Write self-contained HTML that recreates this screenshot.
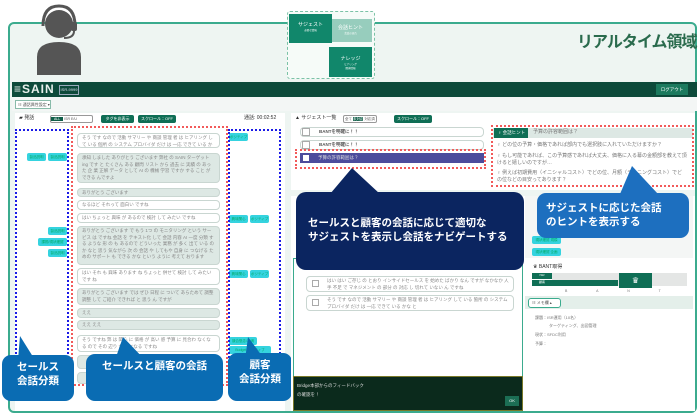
<!DOCTYPE html>
<html><head><meta charset="utf-8"><style>
*{box-sizing:border-box;margin:0;padding:0}
body{width:700px;height:416px;background:#fff;position:relative;overflow:hidden;font-family:"Liberation Sans","Noto Sans CJK JP",sans-serif;color:#555}
.a{position:absolute}
.t{font-size:5px;line-height:7px;color:#777}
.b{position:absolute;border:1px solid #c9d6d1;border-radius:4px;font-size:4.5px;line-height:6.5px;color:#888;padding:1px 4px;overflow:hidden}
.g{background:#dde8e4}
.w{background:#fff}
.tag{position:absolute;background:#35d3df;border-radius:2px;height:8px;width:19px;font-size:3.5px;color:#0a6;line-height:8px;text-align:center;white-space:nowrap;overflow:hidden}
.call{position:absolute;background:#0a6cb3;color:#fff;border-radius:9px;font-weight:bold;text-align:center}
.bd{position:absolute;border:2.5px dotted #1a1ae6}
.rd{position:absolute;border:2px dotted #f25a5a}
.gb{position:absolute;background:#0f6e55;color:#fff;font-size:4px;border-radius:2px;text-align:center;white-space:nowrap}
</style></head><body>
<div class="a" style="left:8px;top:22px;width:689px;height:391px;border:2px solid #3bab8e;border-radius:6px;background:#eef5f2"></div>
<svg class="a" style="left:34px;top:2px" width="50" height="74" viewBox="0 0 50 74">
<circle cx="25" cy="22" r="14" fill="#555"/>
<path d="M9 24 Q9 4 25 4 Q41 4 41 24" fill="none" stroke="#555" stroke-width="3"/>
<rect x="37" y="20" width="6" height="9" rx="2" fill="#555"/>
<path d="M40 29 Q40 36 30 36" fill="none" stroke="#555" stroke-width="2"/>
<path d="M3 73 L3 55 Q3 40 25 40 Q47 40 47 55 L47 73 Z" fill="#555"/>
</svg>
<div class="a" style="left:287px;top:11px;width:88px;height:68px;border:1px dashed #7bc2a6;border-radius:3px;background:#f6fbf8"></div>
<div class="a" style="left:329px;top:19px;width:43px;height:23px;background:#97cdbd;color:#fff;font-size:5px;text-align:center;padding-top:5px">会話ヒント<div style="font-size:2.5px">会話の流れ</div></div>
<div class="a" style="left:289px;top:14px;width:43px;height:29px;background:#11876b;color:#fff;font-size:5px;text-align:center;padding-top:7px">サジェスト<div style="font-size:2.5px">必要な情報</div></div>
<div class="a" style="left:329px;top:47px;width:43px;height:30px;background:#11876b;color:#fff;font-size:5px;text-align:center;padding-top:8px">ナレッジ<div style="font-size:2.5px">ヒアリング<br>関連情報</div></div>
<div class="a" style="left:577px;top:28px;font-size:16px;font-weight:bold;color:#2a6b4d;letter-spacing:-1px;white-space:nowrap">リアルタイム領域</div>
<div class="a" style="left:12px;top:82px;width:685px;height:15px;background:#0d4a3a"></div>
<div class="a" style="left:14px;top:82px;font-size:12px;color:#e8f0ec;letter-spacing:1px;font-weight:bold;line-height:15px">≡SAIN</div>
<div class="a" style="left:59px;top:85px;width:20px;height:10px;border:1px solid #9ab;color:#dde;font-size:4px;line-height:8px;text-align:center">ISR-9999</div>
<div class="a" style="left:656px;top:84px;width:32px;height:11px;background:#1c7a5e;color:#fff;font-size:4.5px;line-height:11px;text-align:center">ログアウト</div>
<div class="a" style="left:12px;top:97px;width:685px;height:14px;background:#f3f6f5"></div>
<div class="a" style="left:15px;top:100px;width:36px;height:9px;border:1px solid #8ba;background:#fff;font-size:4px;line-height:7px;padding-left:2px;white-space:nowrap">☷ 通話属性設定 ▾</div>
<div class="a" style="left:15px;top:113px;width:270px;height:298px;background:#fff"></div>
<div class="a t" style="left:19px;top:115px;color:#333">▰ 発話</div>
<div class="a" style="left:50px;top:115px;width:43px;height:8px;border:1px solid #999;border-radius:2px;font-size:3.5px;line-height:6px;white-space:nowrap"><span style="background:#0f5e48;color:#fff;padding:0 3px">ALL</span> ISR E/U</div>
<div class="gb" style="left:101px;top:115px;width:33px;height:8px;line-height:8px">タグを非表示</div>
<div class="gb" style="left:138px;top:115px;width:38px;height:8px;line-height:8px">スクロール：OFF</div>
<div class="a t" style="left:244px;top:115px;color:#333;white-space:nowrap">通話: 00:02:52</div>
<div class="b w" style="left:77px;top:133px;width:143px;height:15px">そう です なので 活動 サマリー や 商談 管理 者 は ヒアリング して いる 個所 の システム プロバイダ だけ は 一応 できて いる かな と</div>
<div class="b g" style="left:77px;top:153px;width:143px;height:30px">承知 しました ありがとう ございます 弊社 の SAIN ターゲット ing です と たくさん ある 顧問 リスト から 過去 に 実績 の あった 企 業 正解 データ として AI の 機械 学習 ですか する こと が できる んですよ</div>
<div class="b g" style="left:77px;top:188px;width:143px;height:9px">ありがとう ございます</div>
<div class="b w" style="left:77px;top:200px;width:143px;height:10px">なるほど それって 面白い ですね</div>
<div class="b w" style="left:77px;top:213px;width:143px;height:10px">はい ちょっと 興味 が あるので 検討 して みたい ですね</div>
<div class="b g" style="left:77px;top:226px;width:143px;height:39px">ありがとう ございます で もう 1つ の モニタリング という サービス は ですね 会話 を テキスト化 して 会話 内容 AI 一度 分類 する ような 形 の も あるので どういった 業務 が 多く 出て いる のか なと 思う 気ながら 次 の 会話 や してもや 自身 に つなげる ための サポート も できる かな という ように 考えて おります</div>
<div class="b w" style="left:77px;top:268px;width:143px;height:17px">はい それ も 興味 あります ね ちょっと 併せて 検討 して みたい です ね</div>
<div class="b g" style="left:77px;top:288px;width:143px;height:17px">ありがとう ございます では ぜひ 日程 に ついて あらためて 調整 調整 して ご紹介 できれば と 思う ん ですが</div>
<div class="b g" style="left:77px;top:308px;width:143px;height:10px">ええ</div>
<div class="b g" style="left:77px;top:320px;width:143px;height:10px">ええ ええ</div>
<div class="b w" style="left:77px;top:335px;width:143px;height:17px">そう ですね 弊 は 関心 に 価格 が 高い 感 予算 に 見合わ なくなる ので その 辺り が 気になる ですね</div>
<div class="b g" style="left:77px;top:355px;width:143px;height:14px"></div>
<div class="b g" style="left:77px;top:372px;width:143px;height:12px"></div>
<div class="tag" style="left:27px;top:153px">製品説明</div><div class="tag" style="left:48px;top:153px">製品説明</div>
<div class="tag" style="left:48px;top:227px">製品説明</div><div class="tag" style="left:38px;top:238px;width:29px">課題/現状確認</div><div class="tag" style="left:48px;top:249px">製品説明</div>
<div class="tag" style="left:229px;top:133px">ポジティブ</div>
<div class="tag" style="left:229px;top:215px">興味関心</div><div class="tag" style="left:250px;top:215px">ポジティブ</div>
<div class="tag" style="left:229px;top:270px">興味関心</div><div class="tag" style="left:250px;top:270px">ポジティブ</div>
<div class="tag" style="left:229px;top:337px;width:28px">競合懸念/不満</div><div class="tag" style="left:229px;top:346px;width:42px">Budget ポジティブ</div>
<div class="bd" style="left:15px;top:129px;width:54px;height:240px"></div>
<div class="rd" style="left:71px;top:126px;width:157px;height:260px"></div>
<div class="bd" style="left:228px;top:129px;width:53px;height:240px"></div>
<svg class="a" style="left:0;top:330px" width="300" height="40"><path d="M18 30 L20 6 L35 30Z M115 30 L123 7 L145 30Z M245 30 L248 7 L265 30Z" fill="#0a6cb3"/></svg>
<div class="call" style="left:2px;top:355px;width:72px;height:46px;font-size:10.5px;line-height:14px;padding-top:5px">セールス<br>会話分類</div>
<div class="call" style="left:86px;top:354px;width:137px;height:47px;font-size:10.5px;line-height:14px;padding-top:5px">セールスと顧客の会話</div>
<div class="call" style="left:228px;top:353px;width:64px;height:48px;font-size:10.5px;line-height:14px;padding-top:5px">顧客<br>会話分類</div>
<div class="a" style="left:291px;top:113px;width:404px;height:298px;background:#fff"></div>
<div class="a" style="left:291px;top:190px;width:404px;height:6px;background:#eef5f2"></div>
<div class="a t" style="left:295px;top:115px;color:#333;white-space:nowrap">▲ サジェスト一覧</div>
<div class="a" style="left:343px;top:115px;width:34px;height:8px;border:1px solid #999;border-radius:2px;font-size:3.5px;line-height:6px;white-space:nowrap">&nbsp;全て <span style="background:#0f5e48;color:#fff">未対応</span> 対応済</div>
<div class="gb" style="left:394px;top:115px;width:38px;height:8px;line-height:8px">スクロール：OFF</div>
<div class="b w" style="left:300px;top:127px;width:184px;height:10px;font-weight:bold;color:#555;padding-left:18px">BANTを明確に！！</div>
<div class="b w" style="left:300px;top:140px;width:184px;height:10px;font-weight:bold;color:#555;padding-left:18px">BANTを明確に！！</div>
<div class="a" style="left:300px;top:153px;width:184px;height:10px;background:#4c4c9c;color:#ddd;font-size:4.5px;line-height:10px;padding-left:18px">予算の許容範囲は？</div>
<div class="a" style="left:302px;top:128px;width:8px;height:8px;border:1px solid #aaa;background:#fff"></div>
<div class="a" style="left:302px;top:141px;width:8px;height:8px;border:1px solid #aaa;background:#fff"></div>
<div class="a" style="left:303px;top:155px;width:6px;height:6px;background:#fff"></div>
<div class="rd" style="left:295px;top:149px;width:191px;height:20px"></div>
<div class="a" style="left:493px;top:128px;width:200px;height:10px;background:#dde8e4"></div>
<div class="a" style="left:494px;top:128px;width:34px;height:10px;background:#0f6e55;color:#fff;font-size:4.5px;line-height:10px;padding-left:4px;white-space:nowrap">♀ 会話ヒント</div>
<div class="a t" style="left:533px;top:129px">予算の許容範囲は？</div>
<div class="a t" style="left:497px;top:142px;white-space:nowrap">♀ どの位の予算・価格であれば部内でも選択肢に入れていただけますか？</div>
<div class="a t" style="left:497px;top:153px;width:190px">♀ もし可能であれば、この予算感であれば大丈夫、価格に入る幕の金額部を教えて頂けると嬉しいのですが…</div>
<div class="a t" style="left:497px;top:170px;width:190px">♀ 例えば初期費用（イニシャルコスト）でどの位、月額（ランニングコスト）でどの位などの目安ってあります？</div>
<div class="rd" style="left:491px;top:125px;width:203px;height:62px"></div>
<div class="a" style="left:293px;top:258px;width:230px;height:120px;border:1px solid #3bab8e;background:#fff"></div>
<div class="b w" style="left:306px;top:276px;width:208px;height:16px;padding-left:20px">はい はい ご存じ の とおり インサイドセールス を 始めた ばかり なん ですが なかなか 人手 不足 で マネジメント の 部分 の 対応 し 切れて いない ん ですね</div>
<div class="b w" style="left:306px;top:295px;width:208px;height:16px;padding-left:20px">そう です なので 活動 サマリー や 商談 管理 者 は ヒアリング して いる 箇所 の システム プロバイダ だけ は 一応 できて いる かな と</div>
<div class="a" style="left:312px;top:280px;width:7px;height:7px;border:1px solid #aaa"></div>
<div class="a" style="left:312px;top:299px;width:7px;height:7px;border:1px solid #aaa"></div>
<div class="a" style="left:293px;top:376px;width:230px;height:35px;background:#0b2a1c;border:1px solid #7a7a2a;color:#ddd;font-size:4.5px;padding:4px 3px;line-height:9px">Bridge本部からのフィードバック<br>の確認を！</div>
<div class="a" style="left:505px;top:396px;width:14px;height:10px;background:#1c6e54;color:#fff;font-size:4px;line-height:10px;text-align:center">OK</div>
<div class="a" style="left:525px;top:196px;width:168px;height:62px;background:#f4f6f5"></div>
<div class="tag" style="left:532px;top:236px;width:29px">現状確認 規模</div>
<div class="tag" style="left:532px;top:248px;width:29px">現状確認 企画</div>
<div class="a t" style="left:533px;top:264px;color:#333">♛ BANT取得</div>
<div class="a" style="left:532px;top:273px;width:20px;height:6px;background:#0f6e55;color:#fff;font-size:3px;text-align:center">ISR</div>
<div class="a" style="left:532px;top:280px;width:20px;height:6px;background:#0f6e55;color:#fff;font-size:3px;text-align:center">顧客</div>
<div class="a" style="left:552px;top:273px;width:135px;height:13px;background:#e4e6e5"></div>
<div class="a" style="left:552px;top:280px;width:66px;height:6px;background:#0f6e55"></div>
<div class="a" style="left:619px;top:273px;width:33px;height:15px;background:#0f6e55;color:#fff;font-size:8px;text-align:center;line-height:15px">♛</div>
<div class="a t" style="left:565px;top:288px;font-size:3.5px;word-spacing:28px;white-space:nowrap">B A N T</div>
<div class="a" style="left:525px;top:296px;width:168px;height:13px;background:#e4efea"></div>
<div class="a" style="left:528px;top:298px;width:33px;height:10px;border:1px solid #3bab8e;border-radius:3px;background:#fff;font-size:4px;line-height:8px;padding-left:3px;white-space:nowrap">☷ メモ欄 ▴</div>
<div class="a t" style="left:535px;top:314px;font-size:4px">課題：ISR運用（10名）</div>
<div class="a t" style="left:549px;top:322px;font-size:4px">ターゲティング、出図管理</div>
<div class="a t" style="left:535px;top:331px;font-size:4px">現状：SFDC利用</div>
<div class="a t" style="left:535px;top:340px;font-size:4px">予算：</div>
<svg class="a" style="left:290px;top:160px" width="400" height="40"><path d="M40 34 L62 8 L90 34Z" fill="#0b2560"/><path d="M330 34 L342 6 L368 34Z" fill="#1d6fbf"/></svg>
<div class="a" style="left:296px;top:192px;width:228px;height:78px;background:#0b2560;border-radius:10px;color:#fff;font-weight:bold;font-size:10.5px;line-height:14px;padding:24px 0 0 12px;white-space:nowrap">セールスと顧客の会話に応じて適切な<br>サジェストを表示し会話をナビゲートする</div>
<div class="a" style="left:537px;top:193px;width:152px;height:45px;background:#1d6fbf;border-radius:9px;color:#fff;font-weight:bold;font-size:10.5px;line-height:14px;padding:8px 0 0 9px;white-space:nowrap">サジェストに応じた会話<br>のヒントを表示する</div>
</body></html>
